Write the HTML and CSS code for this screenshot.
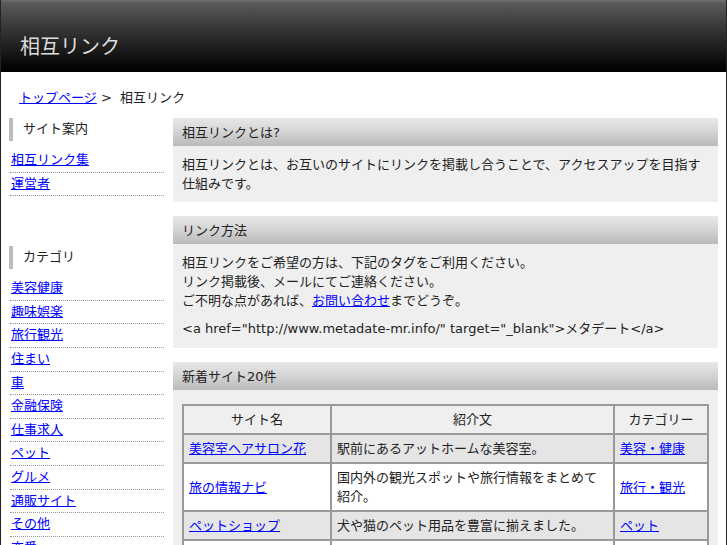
FILE: index.html
```html
<!DOCTYPE html>
<html lang="ja">
<head>
<meta charset="UTF-8">
<meta name="viewport" content="width=device-width, initial-scale=1.0">
<title>相互リンク</title>
<link rel="stylesheet" href="styles.css">
</head>
<body>
<div class="wrap">
  <div class="header">
    <h1>相互リンク</h1>
  </div>

  <div class="crumb">
    <a href="#">トップページ</a> &gt;&nbsp; 相互リンク
  </div>

  <div class="columns">
    <div class="side">
      <div class="side-box">
        <h3>サイト案内</h3>
        <ul>
          <li><a href="#">相互リンク集</a></li>
          <li><a href="#">運営者</a></li>
        </ul>
      </div>

      <div class="side-box">
        <h3>カテゴリ</h3>
        <ul>
          <li><a href="#">美容健康</a></li>
          <li><a href="#">趣味娯楽</a></li>
          <li><a href="#">旅行観光</a></li>
          <li><a href="#">住まい</a></li>
          <li><a href="#">車</a></li>
          <li><a href="#">金融保険</a></li>
          <li><a href="#">仕事求人</a></li>
          <li><a href="#">ペット</a></li>
          <li><a href="#">グルメ</a></li>
          <li><a href="#">通販サイト</a></li>
          <li><a href="#">その他</a></li>
          <li><a href="#">恋愛</a></li>
        </ul>
      </div>
    </div>

    <div class="main">
      <div class="section">
        <h2>相互リンクとは?</h2>
        <div class="panel">
          <p>相互リンクとは、お互いのサイトにリンクを掲載し合うことで、アクセスアップを目指す仕組みです。</p>
        </div>
      </div>

      <div class="section">
        <h2>リンク方法</h2>
        <div class="panel">
          <p>相互リンクをご希望の方は、下記のタグをご利用ください。<br>
          リンク掲載後、メールにてご連絡ください。<br>
          ご不明な点があれば、<a href="#">お問い合わせ</a>までどうぞ。</p>
          <p class="code">&lt;a href="http://www.metadate-mr.info/" target="_blank"&gt;メタデート&lt;/a&gt;</p>
        </div>
      </div>

      <div class="section">
        <h2>新着サイト20件</h2>
        <div class="panel">
          <table class="links">
            <tr>
              <th class="col-name">サイト名</th>
              <th class="col-desc">紹介文</th>
              <th class="col-cat">カテゴリー</th>
            </tr>
            <tr class="odd">
              <td><a href="#">美容室ヘアサロン花</a></td>
              <td>駅前にあるアットホームな美容室。</td>
              <td><a href="#">美容・健康</a></td>
            </tr>
            <tr>
              <td><a href="#">旅の情報ナビ</a></td>
              <td>国内外の観光スポットや旅行情報をまとめて紹介。</td>
              <td><a href="#">旅行・観光</a></td>
            </tr>
            <tr class="odd">
              <td><a href="#">ペットショップ</a></td>
              <td>犬や猫のペット用品を豊富に揃えました。</td>
              <td><a href="#">ペット</a></td>
            </tr>
            <tr>
              <td><a href="#">中古車情報館</a></td>
              <td>全国の中古車情報を毎日更新中。</td>
              <td><a href="#">車</a></td>
            </tr>
          </table>
        </div>
      </div>
    </div>
  </div>
</div>
</body>
</html>
```

FILE: styles.css
```css
body {
  margin: 0;
  background-color: #222222;
  font-family: 'DejaVu Sans', 'Noto Sans CJK JP', sans-serif;
  font-size: 13px;
  color: #222222;
}

a {
  color: #0000ff;
}

.wrap {
  width: 725px;
  margin: 0 auto;
  background-color: #ffffff;
  padding-bottom: 20px;
}

/* header */
.header {
  height: 72px;
  box-sizing: border-box;
  padding: 34px 0 0 19px;
  background: linear-gradient(#707070 0, #5a5a5a 4%, #3a3a3a 35%, #1a1a1a 70%, #050505 92%, #000000 100%);
}

.header h1 {
  margin: 0;
  font-size: 20px;
  font-weight: normal;
  line-height: 26px;
  color: #dddddd;
}

.crumb {
  padding: 16px 0 0 18px;
  line-height: 19px;
  height: 30px;
}

/* columns */
.columns {
  display: flex;
  gap: 9px;
  padding: 0 8px 0 8px;
}

.side {
  width: 155px;
  flex-shrink: 0;
}

.side-box {
  margin-bottom: 50px;
}

.side-box h3 {
  margin: 0;
  height: 23px;
  line-height: 22px;
  padding-left: 10px;
  border-left: 4px solid #bbbbbb;
  font-size: 13px;
  font-weight: normal;
}

.side-box ul {
  list-style: none;
  margin: 8px 0 0 1px;
  padding: 0;
}

.side-box li {
  line-height: 18.6px;
  padding: 2px 0 2px 1px;
  border-bottom: 1px dotted #999999;
}

.main {
  flex: 1;
}

.section {
  margin-bottom: 14px;
}

.section h2 {
  margin: 0;
  padding: 4.5px 9px;
  line-height: 19px;
  font-size: 13px;
  font-weight: normal;
  background: linear-gradient(#e8e8e8, #d6d6d6 45%, #bababa 100%);
}

.panel {
  background-color: #efefef;
  padding: 9px 9px 9px;
  line-height: 19px;
}

.panel p {
  margin: 0;
}

.panel p.code {
  margin-top: 9px;
  padding-bottom: 1px;
}

/* link table */
.links {
  width: 100%;
  margin-top: 5px;
  border-collapse: separate;
  border-spacing: 0;
  border: 1px solid #999999;
}

.links th, .links td {
  border: 1px solid #999999;
  padding: 4px 5px;
  line-height: 19px;
  text-align: left;
  vertical-align: middle;
}

.links th {
  text-align: center;
  font-weight: normal;
}

.links td {
  background-color: #ffffff;
}

.links tr.odd td {
  background-color: #e5e5e5;
}

.col-name {
  width: 136px;
}

.col-cat {
  width: 82px;
}
```
